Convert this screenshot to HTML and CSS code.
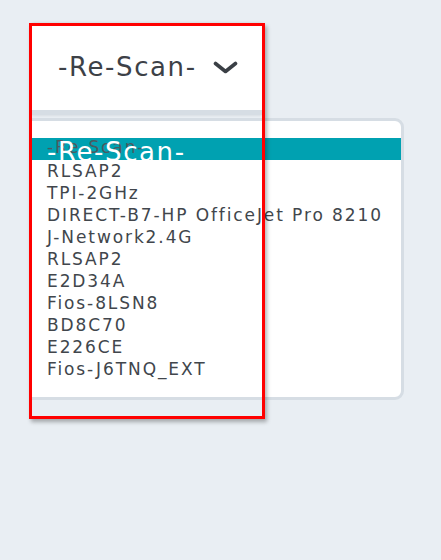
FILE: index.html
```html
<!DOCTYPE html>
<html lang="en">
<head>
    <meta charset="UTF-8">
    <title>Network</title>
    <link rel="stylesheet" href="styles.css">
</head>
<body>
<!--网络选择-->
<div class="page">
    <div class="picker">
        <div class="picker-btn">
            <span class="picker-label">-Re-Scan-</span>
            <svg class="chevron" width="25" height="13" viewBox="0 0 25 13">
                <polyline points="2.5,2.5 12.5,10.5 22.5,2.5" fill="none" stroke="#3a3f45" stroke-width="3.6" stroke-linecap="round" stroke-linejoin="round"/>
            </svg>
        </div>
        <ul class="picker-list">
            <li class="picker-item active"><span class="ghost">-Re-Scan-</span><span class="active-label">-Re-Scan-</span></li>
            <li class="picker-item">RLSAP2</li>
            <li class="picker-item">TPI-2GHz</li>
            <li class="picker-item">DIRECT-B7-HP OfficeJet Pro 8210</li>
            <li class="picker-item">J-Network2.4G</li>
            <li class="picker-item">RLSAP2</li>
            <li class="picker-item">E2D34A</li>
            <li class="picker-item">Fios-8LSN8</li>
            <li class="picker-item">BD8C70</li>
            <li class="picker-item">E226CE</li>
            <li class="picker-item">Fios-J6TNQ_EXT</li>
        </ul>
    </div>
</div>
<!--网络选择-->
</body>
</html>
```

FILE: styles.css
```css
* {
    padding: 0;
    margin: 0;
}

body {
    background-color: #e9eef3;
    font-family: "DejaVu Sans", sans-serif;
    color: #41464c;
}

.page {
    padding: 20px 0 0 29px;
    height: 540px;
}

.picker {
    position: relative;
    width: 236px;
    height: 396px;
}

/* 红色的选框 */
.picker::after {
    content: "";
    position: absolute;
    top: 0;
    left: 0;
    right: 0;
    bottom: 0;
    border: 3px solid #ff0000;
    box-shadow: 2px 3px 4px rgba(0, 0, 0, 0.3);
    pointer-events: none;
    z-index: 2;
}

.picker-btn {
    margin: 3px 3px 0 3px;
    height: 87px;
    background: #ffffff;
    border-bottom: 5px solid #d6dde4;
    box-shadow: 0 0 3px rgba(0, 0, 0, 0.12);
    display: flex;
    align-items: center;
    padding-left: 26px;
    gap: 16px;
}

.picker-label {
    font-size: 26px;
    letter-spacing: 1.6px;
    color: #3d4147;
}

.chevron {
    display: block;
    margin-top: 1px;
}

.picker-list {
    position: absolute;
    top: 95px;
    left: 0;
    width: 369px;
    padding: 17px 0 17px 0;
    background: #ffffff;
    border: 3px solid #d6dde4;
    border-radius: 0 9px 9px 0;
    list-style: none;
    z-index: 1;
}

li {
    list-style: none;
}

.picker-item {
    height: 22px;
    line-height: 22px;
    padding-left: 15px;
    font-size: 17px;
    letter-spacing: 1.9px;
    white-space: nowrap;
}

.picker-item.active {
    position: relative;
    background-color: #00a1b1;
    color: #4b5a60;
}

.ghost {
    position: relative;
    top: -2px;
}

.active-label {
    position: absolute;
    left: 15px;
    top: 1px;
    font-size: 26px;
    line-height: 26px;
    letter-spacing: 1.6px;
    color: #ffffff;
}
```
